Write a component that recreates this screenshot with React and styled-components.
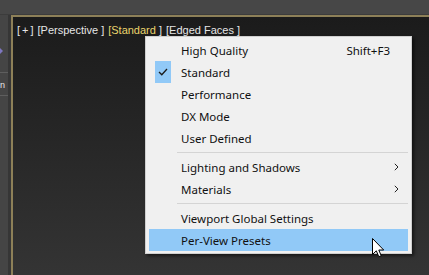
import React from "react";
import styled, { createGlobalStyle } from "styled-components";

const Global = createGlobalStyle`
  html, body { margin: 0; padding: 0; background: #464646; overflow: hidden; }
  #root { width: 429px; height: 275px; }
`;

const Page = styled.div`
  width: 429px;
  height: 275px;
  display: flex;
  flex-direction: column;
  background: #474747;
`;

const TopBar = styled.div`
  height: 14px;
  flex: none;
  background: #474747;
  border-bottom: 1px solid #3c3c3c;
`;

const Body = styled.div`
  flex: 1;
  display: flex;
  min-height: 0;
`;

const LeftStrip = styled.div`
  width: 8px;
  flex: none;
  background: #454545;
  border-right: 3px solid #363636;
  display: flex;
  flex-direction: column;
  padding-top: 33px;
  overflow: hidden;
`;

const StripArrow = styled.div`
  width: 0;
  height: 0;
  border-top: 3px solid transparent;
  border-bottom: 3px solid transparent;
  border-left: 3px solid #7e77c0;
  margin-bottom: 18px;
`;

const StripLine = styled.div`
  height: 1px;
  background: #5e5e5e;
  margin-bottom: ${(p) => p.$mb || 0}px;
`;

const StripGlyph = styled.div`
  font-family: "Liberation Sans", sans-serif;
  font-size: 9px;
  line-height: 12px;
  color: #e8e8e8;
  margin-bottom: 4px;
`;

const Viewport = styled.div`
  position: relative;
  flex: 1;
  border-top: 2px solid #8d8058;
  border-left: 2px solid #8d8058;
  background: linear-gradient(#1b1b1b 0%, #262626 45%, #343434 100%);
  padding: 6px 0 0 4px;
`;

const Labels = styled.div`
  display: flex;
  gap: 4px;
  font-family: "Liberation Sans", sans-serif;
  font-size: 11px;
  line-height: 14px;
  color: #e6e6e6;
  white-space: pre;
`;

const Label = styled.span`
  color: ${(p) => (p.$active ? "#e9d46c" : "#e6e6e6")};
  letter-spacing: ${(p) => (p.$spaced ? "2px" : "0")};
  margin-right: ${(p) => (p.$spaced ? "-2px" : "0")};
`;

const Menu = styled.div`
  position: absolute;
  left: 132px;
  top: 19px;
  width: 261px;
  padding: 2px;
  background: #f0f0f0;
  border: 1px solid #cfcfcf;
  box-shadow: 2px 2px 3px rgba(0, 0, 0, 0.55);
  font-family: "Noto Sans", sans-serif;
  font-size: 11.5px;
  color: #111;
`;

const Item = styled.div`
  height: 22px;
  display: flex;
  align-items: center;
  margin: 0 1px;
  background: ${(p) => (p.$hot ? "#91c9f7" : "transparent")};
`;

const CheckCell = styled.div`
  width: 32px;
  height: 22px;
  flex: none;
  display: flex;
  align-items: center;
  padding-left: 6px;
  box-sizing: border-box;
`;

const CheckBox = styled.div`
  width: 16px;
  height: 22px;
  background: #91c9f7;
  display: flex;
  align-items: center;
  justify-content: center;
`;

const Text = styled.span`
  flex: 1;
  white-space: pre;
`;

const Shortcut = styled.span`
  margin-right: 18px;
  white-space: pre;
`;

const Chevron = styled.svg`
  margin-right: 9px;
  flex: none;
`;

const Separator = styled.div`
  height: 7px;
  display: flex;
  align-items: center;
  margin: 0 1px 0 29px;
  &::after {
    content: "";
    flex: 1;
    height: 1px;
    background: #d4d4d4;
  }
`;

const Cursor = styled.svg`
  position: absolute;
  left: 359px;
  top: 221px;
`;

const Check = () => (
  <svg width="10" height="8" viewBox="0 0 10 8">
    <path d="M1 4 L3.8 6.8 L9 1" fill="none" stroke="#1a1a1a" strokeWidth="1.3" />
  </svg>
);

const Arrow = () => (
  <Chevron width="5" height="8" viewBox="0 0 5 8">
    <path d="M0.8 0.8 L4 4 L0.8 7.2" fill="none" stroke="#222" strokeWidth="1" />
  </Chevron>
);

const MenuItem = ({ label, checked, hot, shortcut, sub }) => (
  <Item $hot={hot}>
    <CheckCell>{checked && <CheckBox><Check /></CheckBox>}</CheckCell>
    <Text>{label}</Text>
    {shortcut && <Shortcut>{shortcut}</Shortcut>}
    {sub && <Arrow />}
  </Item>
);

export default function App() {
  return (
    <Page>
      <Global />
      <TopBar />
      <Body>
        <LeftStrip>
          <StripArrow />
          <StripLine $mb={6} />
          <StripGlyph>n</StripGlyph>
          <StripLine />
        </LeftStrip>
        <Viewport>
          <Labels>
            <Label $spaced>[+]</Label>
            <Label>[Perspective ]</Label>
            <Label><Label $active>[Standard</Label> ]</Label>
            <Label>[Edged Faces ]</Label>
          </Labels>
          <Menu>
            <MenuItem label="High Quality" shortcut="Shift+F3" />
            <MenuItem label="Standard" checked />
            <MenuItem label="Performance" />
            <MenuItem label="DX Mode" />
            <MenuItem label="User Defined" />
            <Separator />
            <MenuItem label="Lighting and Shadows" sub />
            <MenuItem label="Materials" sub />
            <Separator />
            <MenuItem label="Viewport Global Settings" />
            <MenuItem label="Per-View Presets" hot />
          </Menu>
          <Cursor width="13" height="20" viewBox="0 0 13 20">
            <path d="M0.5 0.5 L0.5 16.5 L4.3 12.8 L6.8 18.7 L9.2 17.7 L6.8 12 L11.7 12 Z" fill="#fff" stroke="#000" strokeWidth="1" strokeLinejoin="miter" />
          </Cursor>
        </Viewport>
      </Body>
    </Page>
  );
}
